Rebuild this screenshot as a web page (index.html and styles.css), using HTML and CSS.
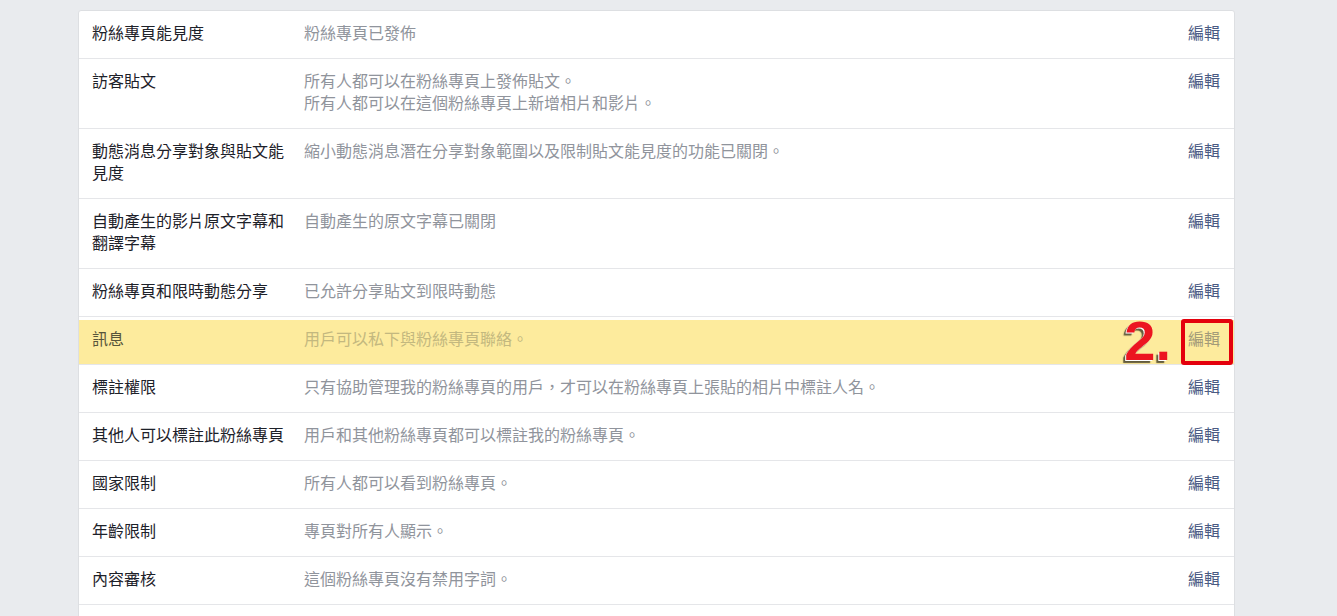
FILE: index.html
```html
<!DOCTYPE html>
<html lang="zh-Hant">
<head>
<meta charset="UTF-8">
<meta name="viewport" content="width=device-width, initial-scale=1.0">
<title>粉絲專頁設定</title>
<link rel="stylesheet" href="styles.css">
</head>
<body>
<div class="page">
    <div class="settings">
        <div class="row">
            <div class="label">粉絲專頁能見度</div>
            <div class="desc">粉絲專頁已發佈</div>
            <a class="edit" href="#">編輯</a>
        </div>
        <div class="row">
            <div class="label">訪客貼文</div>
            <div class="desc">所有人都可以在粉絲專頁上發佈貼文。<br>所有人都可以在這個粉絲專頁上新增相片和影片。</div>
            <a class="edit" href="#">編輯</a>
        </div>
        <div class="row">
            <div class="label">動態消息分享對象與貼文能見度</div>
            <div class="desc">縮小動態消息潛在分享對象範圍以及限制貼文能見度的功能已關閉。</div>
            <a class="edit" href="#">編輯</a>
        </div>
        <div class="row">
            <div class="label">自動產生的影片原文字幕和翻譯字幕</div>
            <div class="desc">自動產生的原文字幕已關閉</div>
            <a class="edit" href="#">編輯</a>
        </div>
        <div class="row">
            <div class="label">粉絲專頁和限時動態分享</div>
            <div class="desc">已允許分享貼文到限時動態</div>
            <a class="edit" href="#">編輯</a>
        </div>
        <div class="row highlight">
            <div class="label">訊息</div>
            <div class="desc">用戶可以私下與粉絲專頁聯絡。</div>
            <a class="edit" href="#">編輯</a>
            <span class="step">2.</span>
            <span class="step-box"></span>
        </div>
        <div class="row">
            <div class="label">標註權限</div>
            <div class="desc">只有協助管理我的粉絲專頁的用戶，才可以在粉絲專頁上張貼的相片中標註人名。</div>
            <a class="edit" href="#">編輯</a>
        </div>
        <div class="row">
            <div class="label">其他人可以標註此粉絲專頁</div>
            <div class="desc">用戶和其他粉絲專頁都可以標註我的粉絲專頁。</div>
            <a class="edit" href="#">編輯</a>
        </div>
        <div class="row">
            <div class="label">國家限制</div>
            <div class="desc">所有人都可以看到粉絲專頁。</div>
            <a class="edit" href="#">編輯</a>
        </div>
        <div class="row">
            <div class="label">年齡限制</div>
            <div class="desc">專頁對所有人顯示。</div>
            <a class="edit" href="#">編輯</a>
        </div>
        <div class="row">
            <div class="label">內容審核</div>
            <div class="desc">這個粉絲專頁沒有禁用字詞。</div>
            <a class="edit" href="#">編輯</a>
        </div>
    </div>
</div>
</body>
</html>
```

FILE: styles.css
```css
html, body {
    margin: 0;
    padding: 0;
    background-color: #e9ebee;
    font-family: "Noto Sans CJK TC", "Noto Sans", sans-serif;
    font-size: 16px;
    line-height: 22px;
}
.page {
    padding: 10px 0 0 78px;
}
.settings {
    width: 1155px;
    padding-bottom: 48px;
    background-color: #fff;
    border: 1px solid #dddfe2;
    border-radius: 3px;
}
.row {
    position: relative;
    display: grid;
    grid-template-columns: 200px 1fr auto;
    column-gap: 12px;
    padding: 10px 14px 15px 13px;
    border-bottom: 1px solid #e5e6e9;
}
.label {
    color: #1d2129;
}
.desc {
    color: #90949c;
}
.edit {
    color: #4b5b84;
    text-decoration: none;
}

/* highlighted setting with step marker */
.highlight::before {
    content: "";
    position: absolute;
    left: 0;
    right: 0;
    top: 3px;
    bottom: 0;
    background-color: #fdeb9d;
}
.highlight .label,
.highlight .desc,
.highlight .edit {
    position: relative;
}
.highlight .label {
    color: #57543a;
}
.highlight .desc {
    color: #c3b87f;
}
.highlight .edit {
    color: #a39b79;
}
.step {
    position: absolute;
    right: 63px;
    top: -4px;
    font-family: "Liberation Sans", Arial, sans-serif;
    font-weight: bold;
    font-size: 56px;
    line-height: 56px;
    color: #ec1520;
    text-shadow: -1px 1px 0 #fff, -3px 3px 1px rgba(70, 66, 44, 0.85);
}
.step-box {
    position: absolute;
    right: 1px;
    top: 2px;
    bottom: -1px;
    width: 44px;
    border: 4px solid #e4000c;
    border-radius: 3px;
}
```
